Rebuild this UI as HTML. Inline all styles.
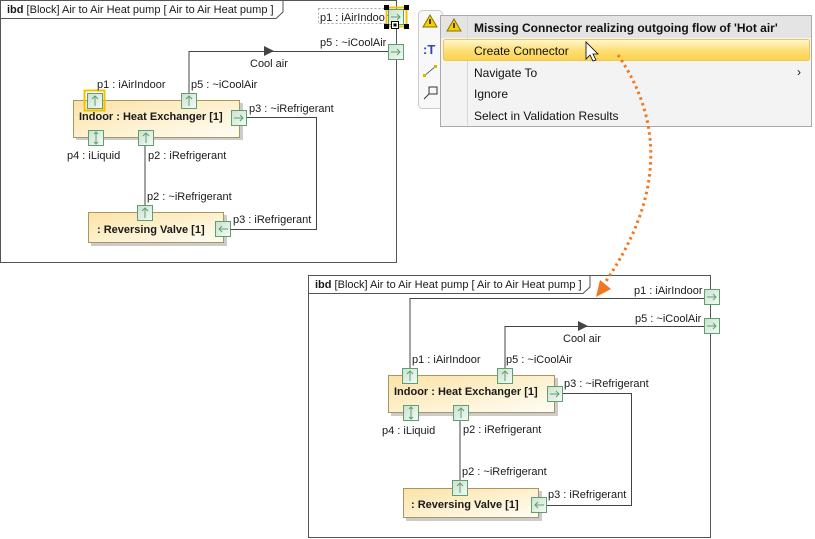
<!DOCTYPE html>
<html><head><meta charset="utf-8"><style>
html,body{margin:0;padding:0;background:#fff;}
svg{display:block;font-family:"Liberation Sans",Arial,sans-serif;}
.t{font-size:11px;fill:#1a1a1a;}
.b{font-size:11px;font-weight:bold;fill:#1a1a1a;}
.m{font-size:12px;fill:#111;font-family:"Liberation Sans",Arial,sans-serif;}
</style></head><body>
<svg width="815" height="539" viewBox="0 0 815 539" xmlns="http://www.w3.org/2000/svg">
<defs>
<linearGradient id="blk" x1="0" y1="0" x2="1" y2="1"><stop offset="0" stop-color="#fbe3a6"/><stop offset="1" stop-color="#fffdf6"/></linearGradient>
<linearGradient id="prt" x1="0" y1="0" x2="1" y2="1"><stop offset="0" stop-color="#c9e2cf"/><stop offset="1" stop-color="#f4faf5"/></linearGradient>
<linearGradient id="hl" x1="0" y1="0" x2="0" y2="1"><stop offset="0" stop-color="#fff7d0"/><stop offset="0.5" stop-color="#fde07a"/><stop offset="1" stop-color="#fbd24a"/></linearGradient>
<g id="pr"><rect x="0.5" y="0.5" width="15" height="15" fill="url(#prt)" stroke="#5f9e6e"/><path d="M3 8H12M9 5L12 8L9 11" fill="none" stroke="#5f9e6e" stroke-width="1"/></g>
<g id="pl"><rect x="0.5" y="0.5" width="15" height="15" fill="url(#prt)" stroke="#5f9e6e"/><path d="M13 8H4M7 5L4 8L7 11" fill="none" stroke="#5f9e6e"/></g>
<g id="pu"><rect x="0.5" y="0.5" width="15" height="15" fill="url(#prt)" stroke="#5f9e6e"/><path d="M8 13V3M5 6L8 3L11 6" fill="none" stroke="#5f9e6e"/></g>
<g id="pd"><rect x="0.5" y="0.5" width="15" height="15" fill="url(#prt)" stroke="#5f9e6e"/><path d="M8 2V14M6 4L8 2L10 4M6 12L8 14L10 12" fill="none" stroke="#5f9e6e"/></g>
</defs>

<!-- TOP DIAGRAM -->
<rect x="0.5" y="0.5" width="396" height="262" fill="#fff" stroke="#555"/>
<path d="M0.5 18.5H276L283 12V0.5" fill="none" stroke="#555"/>
<text x="7" y="13" class="t"><tspan font-weight="bold">ibd</tspan> [Block] Air to Air Heat pump [ Air to Air Heat pump ]</text>

<path d="M189 93V51.5H388" fill="none" stroke="#444"/>
<path d="M264 46L274 51L264 56Z" fill="#444"/>
<text x="250" y="67" class="t">Cool air</text>
<path d="M145 145V205M246 117.5H316.5V229.5H230" fill="none" stroke="#444"/>

<rect x="76" y="103" width="167" height="37" fill="#ccc"/>
<rect x="73.5" y="100.5" width="166" height="37" fill="url(#blk)" stroke="#a89860"/>
<text x="79" y="120" class="b">Indoor : Heat Exchanger [1]</text>
<rect x="91" y="215" width="136" height="31" fill="#ccc"/>
<rect x="88.5" y="212.5" width="135" height="30" fill="url(#blk)" stroke="#a89860"/>
<text x="97" y="233" class="b">: Reversing Valve [1]</text>

<rect x="84.5" y="90.5" width="20" height="20" fill="none" stroke="#f5c000" stroke-width="2"/>
<use href="#pu" x="87" y="93"/>
<use href="#pu" x="181" y="93"/>
<use href="#pr" x="231" y="110"/>
<use href="#pd" x="88" y="130"/>
<use href="#pu" x="138" y="130"/>
<use href="#pu" x="137" y="205"/>
<use href="#pl" x="215" y="221"/>
<text x="97" y="88" class="t">p1 : iAirIndoor</text>
<text x="191" y="88" class="t">p5 : ~iCoolAir</text>
<text x="249" y="112" class="t">p3 : ~iRefrigerant</text>
<text x="67" y="159" class="t">p4 : iLiquid</text>
<text x="148" y="159" class="t">p2 : iRefrigerant</text>
<text x="147" y="200" class="t">p2 : ~iRefrigerant</text>
<text x="233" y="223" class="t">p3 : iRefrigerant</text>

<rect x="318.5" y="8.5" width="68" height="15" fill="none" stroke="#aaa" stroke-dasharray="2,2"/>
<text x="320" y="21" class="t" fill="#333">p1 : iAirIndoor</text>
<text x="320" y="46" class="t">p5 : ~iCoolAir</text>
<use href="#pr" x="388" y="44"/>
<use href="#pr" x="388" y="9"/>
<rect x="386.5" y="7.5" width="20" height="19" fill="none" stroke="#f5c000" stroke-width="2"/>
<rect x="384" y="5" width="5" height="5" fill="#000"/><rect x="404" y="5" width="5" height="5" fill="#000"/>
<rect x="384" y="24" width="5" height="5" fill="#000"/><rect x="404" y="24" width="5" height="5" fill="#000"/>
<rect x="391.5" y="21.5" width="7" height="7" fill="#fff" stroke="#000"/><rect x="393.5" y="23.5" width="3" height="3" fill="#000"/>

<!-- TOOLBAR -->
<rect x="418.5" y="10.5" width="24" height="98" rx="4" fill="#f8f8f8" stroke="#ccc"/>
<path d="M430 15L437 27H423Z" fill="#f5d000" stroke="#8a7000"/><rect x="429.3" y="19" width="1.4" height="5" fill="#000"/>
<text x="423" y="54" font-size="13" font-weight="bold" fill="#3545b5">:T</text>
<path d="M424 76L436 66" stroke="#333" stroke-width="0.8"/><rect x="423" y="74" width="3" height="3" fill="#e0b000"/><rect x="434" y="65" width="3" height="3" fill="#e0b000"/>
<rect x="429" y="87" width="8" height="7" fill="none" stroke="#333"/><path d="M424 99L429 94" stroke="#333"/>

<!-- MENU -->
<rect x="440.5" y="15.5" width="371" height="111" fill="#f3f3f3" stroke="#aaa"/>
<rect x="441" y="16" width="370" height="22" fill="#e4e4e4"/>
<path d="M467.5 16V126" stroke="#d8d8d8"/>
<path d="M454 19L461 31H447Z" fill="#f5d000" stroke="#8a7000"/><rect x="453.3" y="23" width="1.4" height="5" fill="#000"/>
<text x="474" y="32" class="m" font-weight="bold">Missing Connector realizing outgoing flow of 'Hot air'</text>
<rect x="443.5" y="39.5" width="366" height="21" rx="2" fill="url(#hl)" stroke="#e8c860"/>
<text x="474" y="55" class="m">Create Connector</text>
<text x="474" y="77" class="m">Navigate To</text>
<text x="797" y="76" class="m" font-size="11">›</text>
<text x="474" y="98" class="m">Ignore</text>
<text x="474" y="120" class="m">Select in Validation Results</text>
<path d="M586 42V59L590 55L593 61L596 60L593 54H598Z" fill="#fff" stroke="#000" stroke-width="0.8"/>

<!-- BOTTOM DIAGRAM -->
<rect x="308.5" y="275.5" width="402" height="262" fill="#fff" stroke="#555"/>
<path d="M308.5 293.5H583L590 287V275.5" fill="none" stroke="#555"/>
<text x="315" y="288" class="t"><tspan font-weight="bold">ibd</tspan> [Block] Air to Air Heat pump [ Air to Air Heat pump ]</text>

<path d="M410 368V298.5H704M505 368V326.5H704" fill="none" stroke="#444"/>
<path d="M578 321L588 326L578 331Z" fill="#444"/>
<text x="563" y="342" class="t">Cool air</text>
<path d="M460 420V480M562 393.5H631.5V505.5H546" fill="none" stroke="#444"/>

<rect x="391" y="378" width="167" height="38" fill="#ccc"/>
<rect x="388.5" y="375.5" width="166" height="37" fill="url(#blk)" stroke="#a89860"/>
<text x="394" y="395" class="b">Indoor : Heat Exchanger [1]</text>
<rect x="406" y="491" width="136" height="30" fill="#ccc"/>
<rect x="403.5" y="488.5" width="135" height="29" fill="url(#blk)" stroke="#a89860"/>
<text x="411" y="508" class="b">: Reversing Valve [1]</text>

<use href="#pu" x="402" y="368"/>
<use href="#pu" x="497" y="368"/>
<use href="#pr" x="547" y="386"/>
<use href="#pd" x="403" y="405"/>
<use href="#pu" x="453" y="405"/>
<use href="#pu" x="452" y="480"/>
<use href="#pl" x="531" y="497"/>
<use href="#pr" x="704" y="289"/>
<use href="#pr" x="704" y="318"/>
<text x="412" y="363" class="t">p1 : iAirIndoor</text>
<text x="506" y="363" class="t">p5 : ~iCoolAir</text>
<text x="564" y="387" class="t">p3 : ~iRefrigerant</text>
<text x="382" y="434" class="t">p4 : iLiquid</text>
<text x="463" y="433" class="t">p2 : iRefrigerant</text>
<text x="462" y="475" class="t">p2 : ~iRefrigerant</text>
<text x="548" y="498" class="t">p3 : iRefrigerant</text>
<text x="634" y="294" class="t">p1 : iAirIndoor</text>
<text x="635" y="322" class="t">p5 : ~iCoolAir</text>

<!-- dotted orange arrow -->
<path d="M618 55Q690 160 604 284" fill="none" stroke="#f07820" stroke-width="3" stroke-dasharray="2.5,3.5"/>
<path d="M596 297L600 280L611 289Z" fill="#f07820"/>
</svg>
</body></html>
